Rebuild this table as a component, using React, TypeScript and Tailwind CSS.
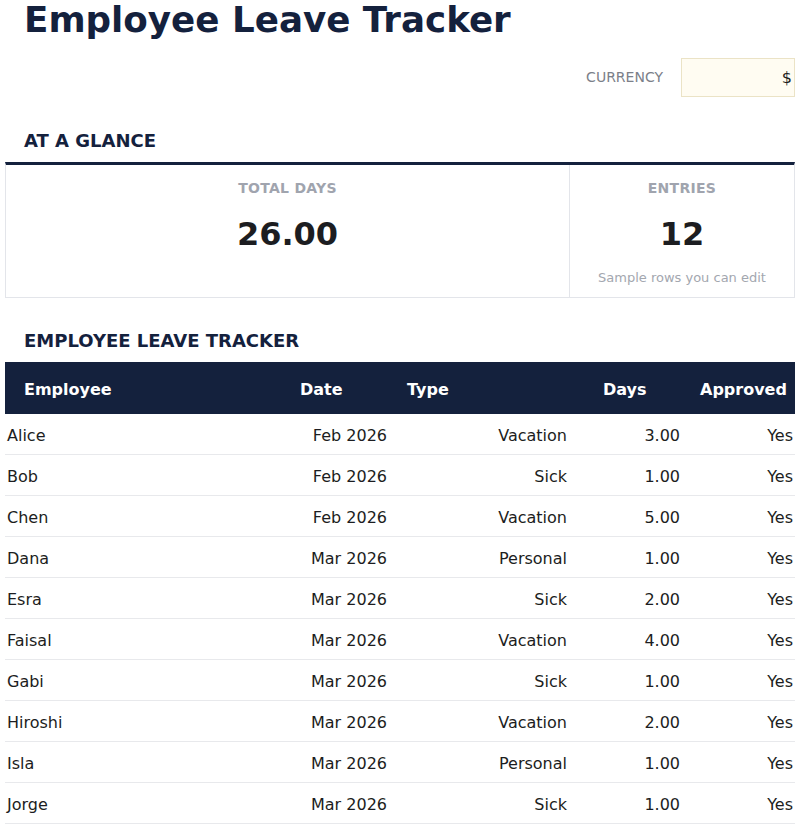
const rows = [
  { name: 'Alice', date: 'Feb 2026', type: 'Vacation', days: '3.00', ok: 'Yes' },
  { name: 'Bob', date: 'Feb 2026', type: 'Sick', days: '1.00', ok: 'Yes' },
  { name: 'Chen', date: 'Feb 2026', type: 'Vacation', days: '5.00', ok: 'Yes' },
  { name: 'Dana', date: 'Mar 2026', type: 'Personal', days: '1.00', ok: 'Yes' },
  { name: 'Esra', date: 'Mar 2026', type: 'Sick', days: '2.00', ok: 'Yes' },
  { name: 'Faisal', date: 'Mar 2026', type: 'Vacation', days: '4.00', ok: 'Yes' },
  { name: 'Gabi', date: 'Mar 2026', type: 'Sick', days: '1.00', ok: 'Yes' },
  { name: 'Hiroshi', date: 'Mar 2026', type: 'Vacation', days: '2.00', ok: 'Yes' },
  { name: 'Isla', date: 'Mar 2026', type: 'Personal', days: '1.00', ok: 'Yes' },
  { name: 'Jorge', date: 'Mar 2026', type: 'Sick', days: '1.00', ok: 'Yes' },
  { name: 'Kofi', date: 'Mar 2026', type: 'Vacation', days: '3.00', ok: 'Yes' },
  { name: 'Lena', date: 'Mar 2026', type: 'Personal', days: '2.00', ok: 'No' },
];

const cols = 'grid grid-cols-[276px_108px_180px_113px_113px]';

export default function App() {
  return (
    <div className="h-[830px] w-[800px] overflow-hidden bg-white px-[5px] font-['DejaVu_Sans',sans-serif] text-[#1c1d21]">
      <h1 className="pl-[19px] text-[35.7px] font-bold leading-[40px] text-[#14213d]">Employee Leave Tracker</h1>

      <div className="mt-[18px] flex items-center justify-end gap-[18px]">
        <span className="text-[14px] text-[#7b8089]">CURRENCY</span>
        <div className="flex h-[39px] w-[114px] items-center justify-end border border-[#ebe3c6] bg-[#fffcf2] pr-[2px] text-[16px]">
          $
        </div>
      </div>

      <h2 className="mt-[33px] pl-[19px] text-[18px] font-bold leading-[22px] text-[#14213d]">AT A GLANCE</h2>

      <section className="mt-[10px] grid grid-cols-[563px_225px] border border-t-[3px] border-[#e3e5ea] border-t-[#14213d]">
        <div className="flex flex-col items-center pt-[13px]">
          <p className="text-[14px] font-bold leading-[20px] tracking-[0.02em] text-[#a0a4ae]">TOTAL DAYS</p>
          <p className="mt-[16px] text-[32px] font-bold leading-[40px]">26.00</p>
        </div>
        <div className="flex flex-col items-center border-l border-[#e3e5ea] pb-[10px] pt-[13px]">
          <p className="text-[14px] font-bold leading-[20px] tracking-[0.02em] text-[#a0a4ae]">ENTRIES</p>
          <p className="mt-[16px] text-[32px] font-bold leading-[40px]">12</p>
          <p className="mt-[15px] text-[13px] leading-[18px] text-[#a3a7af]">Sample rows you can edit</p>
        </div>
      </section>

      <h2 className="mt-[32px] pl-[19px] text-[18px] font-bold leading-[22px] text-[#14213d]">EMPLOYEE LEAVE TRACKER</h2>

      <div className="mt-[10px]">
        <div className={`${cols} h-[52px] items-center bg-[#14213d] pt-[4px] text-[16px] font-bold text-white`}>
          <span className="pl-[19px]">Employee</span>
          <span className="pl-[19px]">Date</span>
          <span className="pl-[18px]">Type</span>
          <span className="pl-[34px]">Days</span>
          <span className="pl-[18px]">Approved</span>
        </div>
        {rows.map((r) => (
          <div key={r.name} className={`${cols} h-[41px] items-center border-b border-[#e8e9ec] pt-[4px] text-[16px]`}>
            <span className="pl-[2px]">{r.name}</span>
            <span className="pr-[2px] text-right">{r.date}</span>
            <span className="pr-[2px] text-right">{r.type}</span>
            <span className="pr-[2px] text-right">{r.days}</span>
            <span className="pr-[2px] text-right">{r.ok}</span>
          </div>
        ))}
      </div>
    </div>
  );
}
